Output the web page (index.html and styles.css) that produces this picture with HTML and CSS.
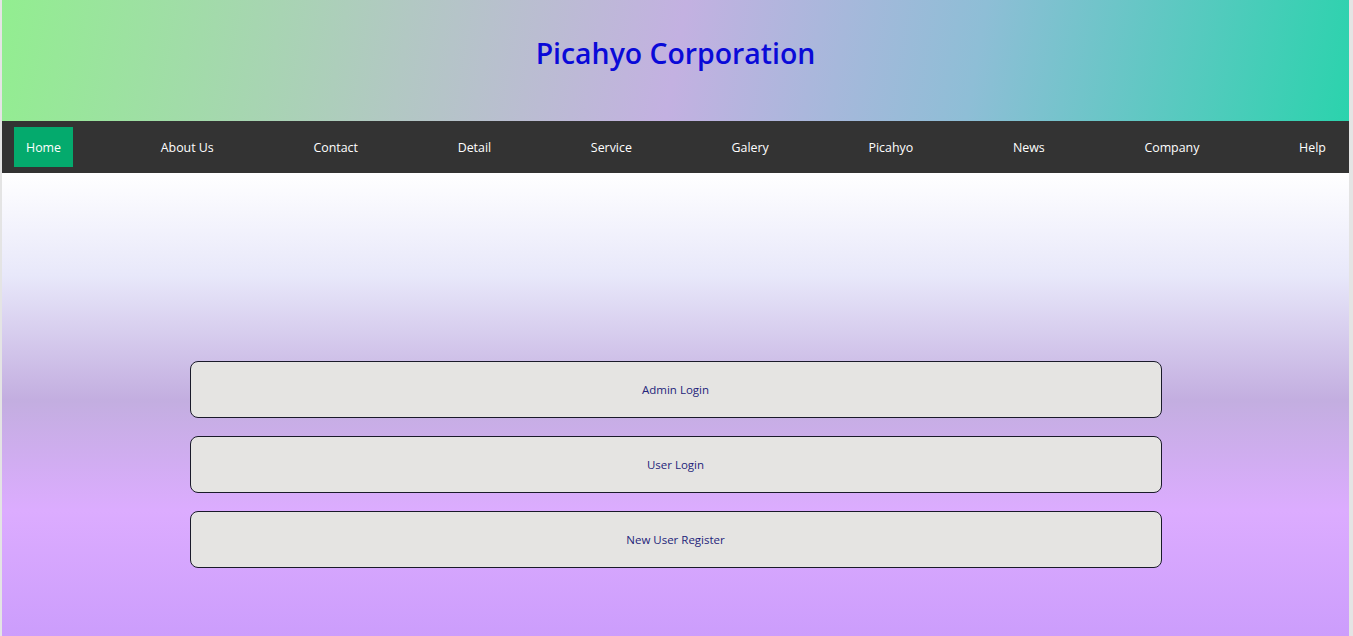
FILE: index.html
```html
<!DOCTYPE html>
<html lang="en">
<head>
<meta charset="utf-8">
<title>Picahyo Corporation</title>
<link rel="stylesheet" href="styles.css">
</head>
<body>
<div class="page">
  <header class="header">
    <h1 class="title">Picahyo Corporation</h1>
  </header>
  <nav class="nav">
    <a class="nav-item active" href="#">Home</a>
    <a class="nav-item" href="#">About Us</a>
    <a class="nav-item" href="#">Contact</a>
    <a class="nav-item" href="#">Detail</a>
    <a class="nav-item" href="#">Service</a>
    <a class="nav-item" href="#">Galery</a>
    <a class="nav-item" href="#">Picahyo</a>
    <a class="nav-item" href="#">News</a>
    <a class="nav-item" href="#">Company</a>
    <a class="nav-item" href="#">Help</a>
  </nav>
  <main class="main">
    <div class="actions">
      <button class="action-btn">Admin Login</button>
      <button class="action-btn">User Login</button>
      <button class="action-btn">New User Register</button>
    </div>
  </main>
</div>
</body>
</html>
```
FILE: styles.css
```css
html {
  background: #e4e4e4;
  height: 100%;
}
body {
  margin: 0 4px 0 2px;
  height: 100%;
  font-family: "Open Sans", "Noto Sans", sans-serif;
  overflow: hidden;
}
.page {
  display: flex;
  flex-direction: column;
  min-height: 100%;
  background: #fff;
}
.header {
  height: 121px;
  box-sizing: border-box;
  display: flex;
  align-items: flex-start;
  justify-content: center;
  padding-top: 34px;
  background: linear-gradient(100deg, #92ee90 0%, #b2c8c3 30%, #c3b1e1 50%, #8ebed6 72%, #2bd3ad 100%);
}
.title {
  margin: 0;
  font-size: 28.4px;
  line-height: 39px;
  font-weight: 600;
  color: #0a0ad8;
}
.nav {
  height: 52px;
  box-sizing: border-box;
  background: #333333;
  display: flex;
  align-items: center;
  justify-content: space-between;
  padding: 0 11px 0 12px;
}
.nav-item {
  display: block;
  color: #fff;
  text-decoration: none;
  font-size: 12.4px;
  line-height: 20px;
  padding: 11px 12px 9px 12px;
}
.nav-item.active {
  background: #04aa6d;
}
.main {
  flex: 1;
  background: linear-gradient(to bottom, #ffffff 0%, #e8e8fa 22%, #c3aee0 49%, #dcacff 73%, #cc9dfc 100%);
  padding-top: 188px;
}
.actions {
  width: 972px;
  margin: 0 auto;
  display: flex;
  flex-direction: column;
  gap: 18px;
}
.action-btn {
  height: 57px;
  background: #e5e4e2;
  border: 1px solid #1a1a2a;
  border-radius: 8px;
  font-family: "Open Sans", "Noto Sans", sans-serif;
  font-size: 11.5px;
  color: #24247a;
}
```
